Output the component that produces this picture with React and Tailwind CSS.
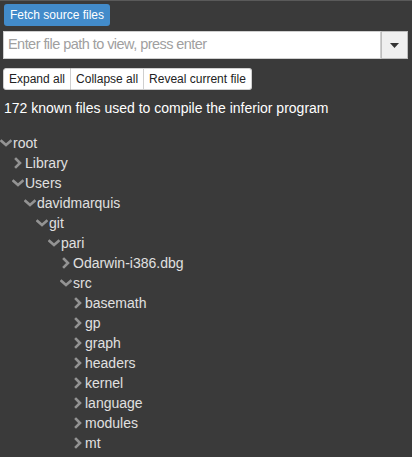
import React from "react";

const Down = () => (
  <svg width="12" height="10" viewBox="0 0 12 10" className="shrink-0">
    <path d="M1.5 3 L6 7 L10.5 3" fill="none" stroke="#939393" strokeWidth="2.6" strokeLinecap="square" />
  </svg>
);
const Right = () => (
  <svg width="12" height="12" viewBox="0 0 12 12" className="shrink-0">
    <path d="M4 2 L8 6 L4 10" fill="none" stroke="#939393" strokeWidth="2.6" strokeLinecap="square" />
  </svg>
);

const rows = [
  ["root", 0, true],
  ["Library", 1, false],
  ["Users", 1, true],
  ["davidmarquis", 2, true],
  ["git", 3, true],
  ["pari", 4, true],
  ["Odarwin-i386.dbg", 5, false],
  ["src", 5, true],
  ["basemath", 6, false],
  ["gp", 6, false],
  ["graph", 6, false],
  ["headers", 6, false],
  ["kernel", 6, false],
  ["language", 6, false],
  ["modules", 6, false],
  ["mt", 6, false],
];

const pads = ["pl-0", "pl-[12px]", "pl-[24px]", "pl-[36px]", "pl-[48px]", "pl-[60px]", "pl-[72px]"];

export default function App() {
  return (
    <div className="w-[412px] h-[457px] overflow-hidden bg-[#3a3a3a] border-t border-[#5a5a5a] font-['Liberation_Sans',Arial,sans-serif]">
      <div className="flex pt-[3px] px-[4px]">
        <button className="bg-[#428bca] text-white text-[12px] leading-[22px] px-[6px] rounded-[3px] h-[22px]">
          Fetch source files
        </button>
      </div>
      <div className="flex mt-[5px] ml-[3px] mr-[4px] h-[28px]">
        <div className="flex-1 bg-white flex items-center pl-[4px] text-[14.5px] tracking-[-0.55px] text-[#a0a0a0] border border-[#cfcfcf]">
          Enter file path to view, press enter
        </div>
        <div className="w-[27px] bg-[#efefef] border border-[#bdbdbd] flex items-center justify-center">
          <svg width="9" height="5" viewBox="0 0 9 5"><path d="M0 0 H9 L4.5 5 Z" fill="#333" /></svg>
        </div>
      </div>
      <div className="flex mt-[9px] ml-[3px] h-[22px] text-[12px] text-[#222]">
        <div className="bg-white border border-[#cfcfcf] rounded-l-[3px] px-[5px] flex items-center">Expand all</div>
        <div className="bg-white border border-l-0 border-[#cfcfcf] px-[5px] flex items-center">Collapse all</div>
        <div className="bg-white border border-l-0 border-[#cfcfcf] rounded-r-[3px] px-[5px] flex items-center">Reveal current file</div>
      </div>
      <div className="mt-[10px] ml-[4px] text-[14px] text-white leading-[16px]">
        172 known files used to compile the inferior program
      </div>
      <div className="mt-[17px] text-[14px] text-[#e0e0e0]">
        {rows.map(([name, lvl, open]) => (
          <div key={name} className={"flex items-center h-[20px] " + pads[lvl]}>
            {open ? <Down /> : <Right />}
            <span className="ml-[1px]">{name}</span>
          </div>
        ))}
      </div>
    </div>
  );
}
